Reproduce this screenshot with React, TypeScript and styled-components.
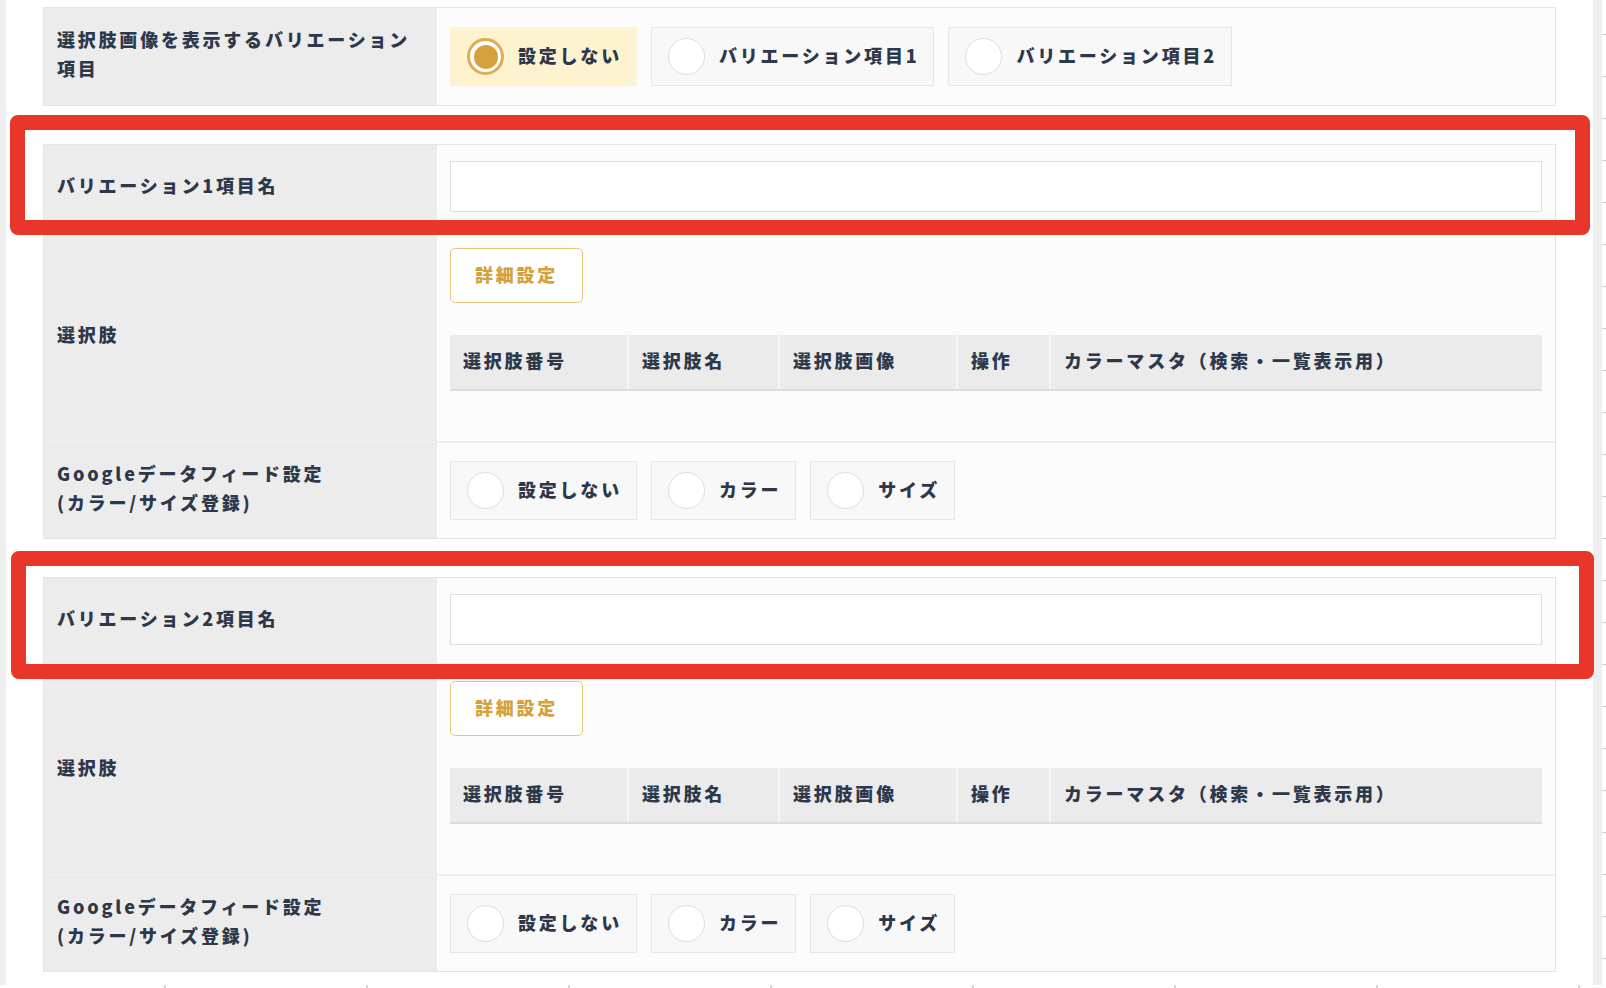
import styled, { createGlobalStyle } from "styled-components";

const GlobalStyle = createGlobalStyle`
	html, body {
		margin: 0;
		padding: 0;
		background: #fff;
	}
	body {
		font-family: "Noto Sans CJK JP", "Noto Sans", sans-serif;
		color: #2d394b;
	}
	* {
		box-sizing: border-box;
	}
`;

const Page = styled.div`
	width: 1606px;
	height: 988px;
	overflow: hidden;
	display: flex;
	flex-direction: column;
`;

const Body = styled.div`
	display: flex;
	height: 985px;
	flex-shrink: 0;
`;

const LeftGutter = styled.div`
	width: 6px;
	flex-shrink: 0;
	background: #efefef;
`;

const Main = styled.main`
	flex: 1;
	display: flex;
	flex-direction: column;
	gap: 38px;
	padding: 7px 37px 0;
`;

const Rail = styled.div`
	display: flex;
	flex-shrink: 0;
`;

const RailBand = styled.div`
	width: 9px;
	background: #eeeeee;
`;

const RailTicks = styled.div`
	width: 4px;
	display: flex;
	flex-direction: column;
	gap: 41px;
	padding-top: 34px;
`;

const RailTick = styled.span`
	display: block;
	height: 1px;
	background: #cfcfcf;
`;

const BottomRuler = styled.div`
	display: flex;
	gap: 200px;
	height: 3px;
	padding-left: 164px;
`;

const RulerTick = styled.span`
	width: 2px;
	height: 3px;
	background: #d6d6d6;
`;

const Table = styled.section`
	display: flex;
	flex-direction: column;
	border: 1px solid #e4e4e4;
	background: #fcfcfc;

	& > * + * {
		border-top: 2px solid #efefef;
	}
`;

const Highlight = styled.div<{ $top: number; $left: number; $right: number; $bottom: number }>`
	position: relative;

	&::after {
		content: "";
		position: absolute;
		top: ${({ $top }) => $top}px;
		left: ${({ $left }) => $left}px;
		right: ${({ $right }) => $right}px;
		bottom: ${({ $bottom }) => $bottom}px;
		border: 15px solid #e9362a;
		border-radius: 8px;
		pointer-events: none;
		z-index: 2;
	}
`;

const Row = styled.div`
	display: grid;
	grid-template-columns: 393px 1fr;
`;

const Label = styled.div`
	display: flex;
	align-items: center;
	padding: 0 13px 5px;
	background: #ececec;
	font-size: 18px;
	font-weight: 900;
	letter-spacing: 0.155em;
	line-height: 1.6;
`;

const Cell = styled.div<{ $top: number; $bottom: number }>`
	display: flex;
	flex-direction: column;
	align-items: flex-start;
	padding: ${({ $top }) => $top}px 13px ${({ $bottom }) => $bottom}px;
`;

const Options = styled.div`
	display: flex;
	gap: 14px;
`;

const Option = styled.label<{ $checked?: boolean }>`
	display: flex;
	align-items: center;
	gap: 14px;
	height: 59px;
	padding: 0 14px 0 16px;
	background: ${({ $checked }) => ($checked ? "#fdf3d1" : "#f8f8f8")};
	border: 1px solid ${({ $checked }) => ($checked ? "#fdf3d1" : "#e6e6e6")};
	font-size: 18px;
	font-weight: 900;
	letter-spacing: 0.155em;
	white-space: nowrap;
`;

const OptionText = styled.span`
	padding-bottom: 4px;
`;

const Radio = styled.span<{ $checked?: boolean }>`
	display: grid;
	place-items: center;
	flex-shrink: 0;
	width: 37px;
	height: 37px;
	border-radius: 50%;
	background: #fff;
	border: ${({ $checked }) => ($checked ? "3px solid #dcae4e" : "1px solid #dddddd")};

	&::after {
		content: "";
		display: ${({ $checked }) => ($checked ? "block" : "none")};
		width: 24px;
		height: 24px;
		border-radius: 50%;
		background: #d4a13c;
	}
`;

const TextInput = styled.input`
	align-self: stretch;
	height: 51px;
	margin: 0;
	border: 1px solid #dedede;
	background: #fff;
	outline: none;
`;

const DetailButton = styled.button`
	height: 55px;
	padding: 0 24px 4px;
	border: 1.5px solid #e8c67c;
	border-radius: 5px;
	background: #fff;
	color: #d4a13c;
	font-family: "Noto Sans CJK JP", sans-serif;
	font-size: 18px;
	font-weight: 900;
	letter-spacing: 0.155em;
`;

const ChoiceTable = styled.table`
	align-self: stretch;
	table-layout: fixed;
	border-collapse: collapse;
	margin: 32px 0;
`;

const Th = styled.th<{ $w?: number }>`
	width: ${({ $w }) => ($w ? `${$w}px` : "auto")};
	height: 55px;
	padding: 0 13px 4px;
	background: #ebebeb;
	border-bottom: 2px solid #dcdcdc;
	border-left: 2px solid #f6f6f6;
	text-align: left;
	font-size: 18px;
	font-weight: 900;
	letter-spacing: 0.155em;
	white-space: nowrap;

	&:first-child {
		border-left: none;
	}
`;

type Choice = { label: string; checked?: boolean };

function RadioGroup({ items }: { items: Choice[] }) {
	return (
		<Options>
			{items.map((item) => (
				<Option key={item.label} $checked={item.checked}>
					<Radio $checked={item.checked} />
					<OptionText>{item.label}</OptionText>
				</Option>
			))}
		</Options>
	);
}

const columns = [
	{ label: "選択肢番号", w: 178 },
	{ label: "選択肢名", w: 151 },
	{ label: "選択肢画像", w: 178 },
	{ label: "操作", w: 93 },
	{ label: "カラーマスタ（検索・一覧表示用）" },
];

const feedChoices: Choice[] = [{ label: "設定しない" }, { label: "カラー" }, { label: "サイズ" }];

function VariationSection({
	index,
	frame,
}: {
	index: number;
	frame: { top: number; left: number; right: number; bottom: number };
}) {
	return (
		<Table>
			<Highlight $top={frame.top} $left={frame.left} $right={frame.right} $bottom={frame.bottom}>
				<Row>
					<Label>バリエーション{index}項目名</Label>
					<Cell $top={16} $bottom={18}>
						<TextInput type="text" />
					</Cell>
				</Row>
			</Highlight>
			<Row>
				<Label>選択肢</Label>
				<Cell $top={16} $bottom={18}>
					<DetailButton type="button">詳細設定</DetailButton>
					<ChoiceTable>
						<thead>
							<tr>
								{columns.map((c) => (
									<Th key={c.label} $w={c.w}>
										{c.label}
									</Th>
								))}
							</tr>
						</thead>
					</ChoiceTable>
				</Cell>
			</Row>
			<Row>
				<Label>
					Googleデータフィード設定
					<br />
					(カラー/サイズ登録)
				</Label>
				<Cell $top={18} $bottom={18}>
					<RadioGroup items={feedChoices} />
				</Cell>
			</Row>
		</Table>
	);
}

export default function App() {
	return (
		<Page>
			<GlobalStyle />
			<Body>
				<LeftGutter />
				<Main>
					<Table>
						<Row>
							<Label>
								選択肢画像を表示するバリエーション
								<br />
								項目
							</Label>
							<Cell $top={19} $bottom={19}>
								<RadioGroup
									items={[
										{ label: "設定しない", checked: true },
										{ label: "バリエーション項目1" },
										{ label: "バリエーション項目2" },
									]}
								/>
							</Cell>
						</Row>
					</Table>
					<VariationSection index={1} frame={{ top: -30, left: -34, right: -35, bottom: -5 }} />
					<VariationSection index={2} frame={{ top: -27, left: -33, right: -39, bottom: -16 }} />
				</Main>
				<Rail>
					<RailBand />
					<RailTicks>
						{Array.from({ length: 23 }, (_, i) => (
							<RailTick key={i} />
						))}
					</RailTicks>
				</Rail>
			</Body>
			<BottomRuler>
				{Array.from({ length: 8 }, (_, i) => (
					<RulerTick key={i} />
				))}
			</BottomRuler>
		</Page>
	);
}
